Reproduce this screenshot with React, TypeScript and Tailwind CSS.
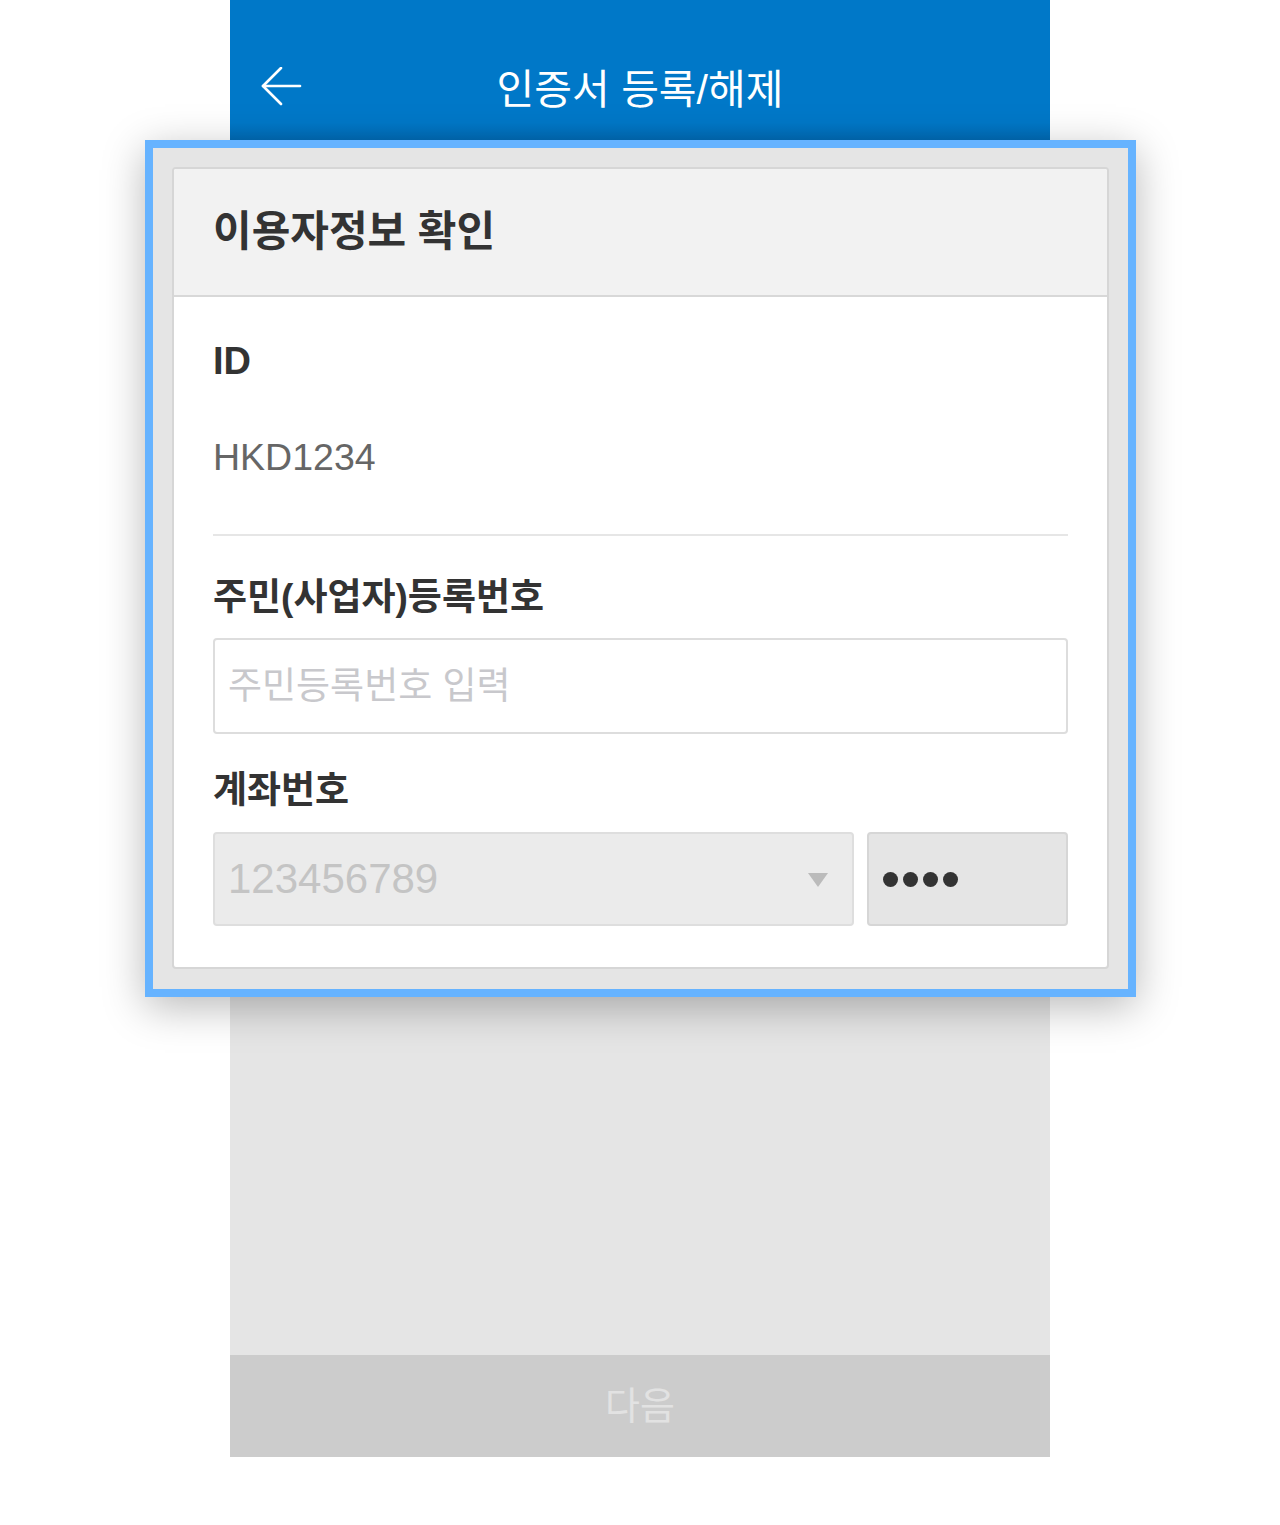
import React from "react";

const FONT = '"Liberation Sans", "Noto Sans CJK KR", sans-serif';

export default function App() {
  return (
    <div className="relative w-[1280px] h-[1525px] bg-white overflow-hidden" style={{ fontFamily: FONT }}>
      {/* phone column */}
      <div className="ml-[230px] w-[820px] flex flex-col">
        <div className="h-[140px] pt-[40px] bg-[linear-gradient(to_bottom,#0078c8_88%,#006bb6)] relative">
          <div className="h-[100px] flex items-center justify-center relative">
            <svg className="absolute left-[30px] top-[27px]" width="42" height="42" viewBox="0 0 42 42" fill="none" stroke="white" strokeWidth="2.6" strokeLinecap="round" strokeLinejoin="round">
              <path d="M3 19 H40" />
              <path d="M21 1 L3 19 L21 37" />
            </svg>
            <span className="text-white text-[41px] leading-none">인증서 등록/해제</span>
          </div>
        </div>
        <div className="h-[1215px] bg-[#e5e5e5]" />
        <div className="h-[102px] bg-[#cccccc] flex items-center justify-center">
          <span className="text-[#e2e2e2] text-[38px] leading-none">다음</span>
        </div>
      </div>

      {/* highlighted overlay */}
      <div className="absolute left-[145px] top-[140px] w-[991px] h-[857px] border-[8px] border-[#66b3ff] bg-[#e5e5e5] p-[19px] shadow-[0_10px_40px_rgba(0,0,0,0.28)]">
        <div className="border-2 border-[#d6d6d6] rounded-[4px] bg-white flex flex-col overflow-hidden">
          <div className="h-[128px] bg-[#f2f2f2] border-b-2 border-[#d8d8d8] flex items-center px-[39px]">
            <span className="text-[42px] font-bold text-[#333333] leading-none">이용자정보 확인</span>
          </div>
          <div className="px-[39px] pt-[42px] pb-[41px] flex flex-col">
            <div className="text-[38px] font-bold text-[#333333] leading-[44px]">ID</div>
            <div className="mt-[52px] text-[37.5px] text-[#666666] leading-[44px]">HKD1234</div>
            <div className="mt-[55px] h-[2px] bg-[#e6e6e6]" />
            <div className="mt-[40px] text-[37px] font-bold text-[#333333] leading-[44px]">주민(사업자)등록번호</div>
            <div className="mt-[18px] h-[96px] border-2 border-[#dddddd] rounded-[4px] flex items-center px-[13px]">
              <span className="text-[37px] text-[#c8c8cc] leading-none">주민등록번호 입력</span>
            </div>
            <div className="mt-[35px] text-[37px] font-bold text-[#333333] leading-[44px]">계좌번호</div>
            <div className="mt-[19px] flex gap-[13px] h-[94px]">
              <div className="flex-1 bg-[#ebebeb] border-2 border-[#dedede] rounded-[4px] flex items-center px-[13px] relative">
                <span className="text-[42px] text-[#c4c4c4] leading-none">123456789</span>
                <svg className="absolute right-[24px] top-[39px]" width="20" height="14" viewBox="0 0 20 14">
                  <path d="M0 0 H20 L10 14 Z" fill="#bbbbbb" />
                </svg>
              </div>
              <div className="w-[201px] bg-[#e5e5e5] border-2 border-[#d6d6d6] rounded-[4px] flex items-center pl-[14px] gap-[5px]">
                <span className="w-[15px] h-[15px] rounded-full bg-[#333333]" />
                <span className="w-[15px] h-[15px] rounded-full bg-[#333333]" />
                <span className="w-[15px] h-[15px] rounded-full bg-[#333333]" />
                <span className="w-[15px] h-[15px] rounded-full bg-[#333333]" />
              </div>
            </div>
          </div>
        </div>
      </div>
    </div>
  );
}
